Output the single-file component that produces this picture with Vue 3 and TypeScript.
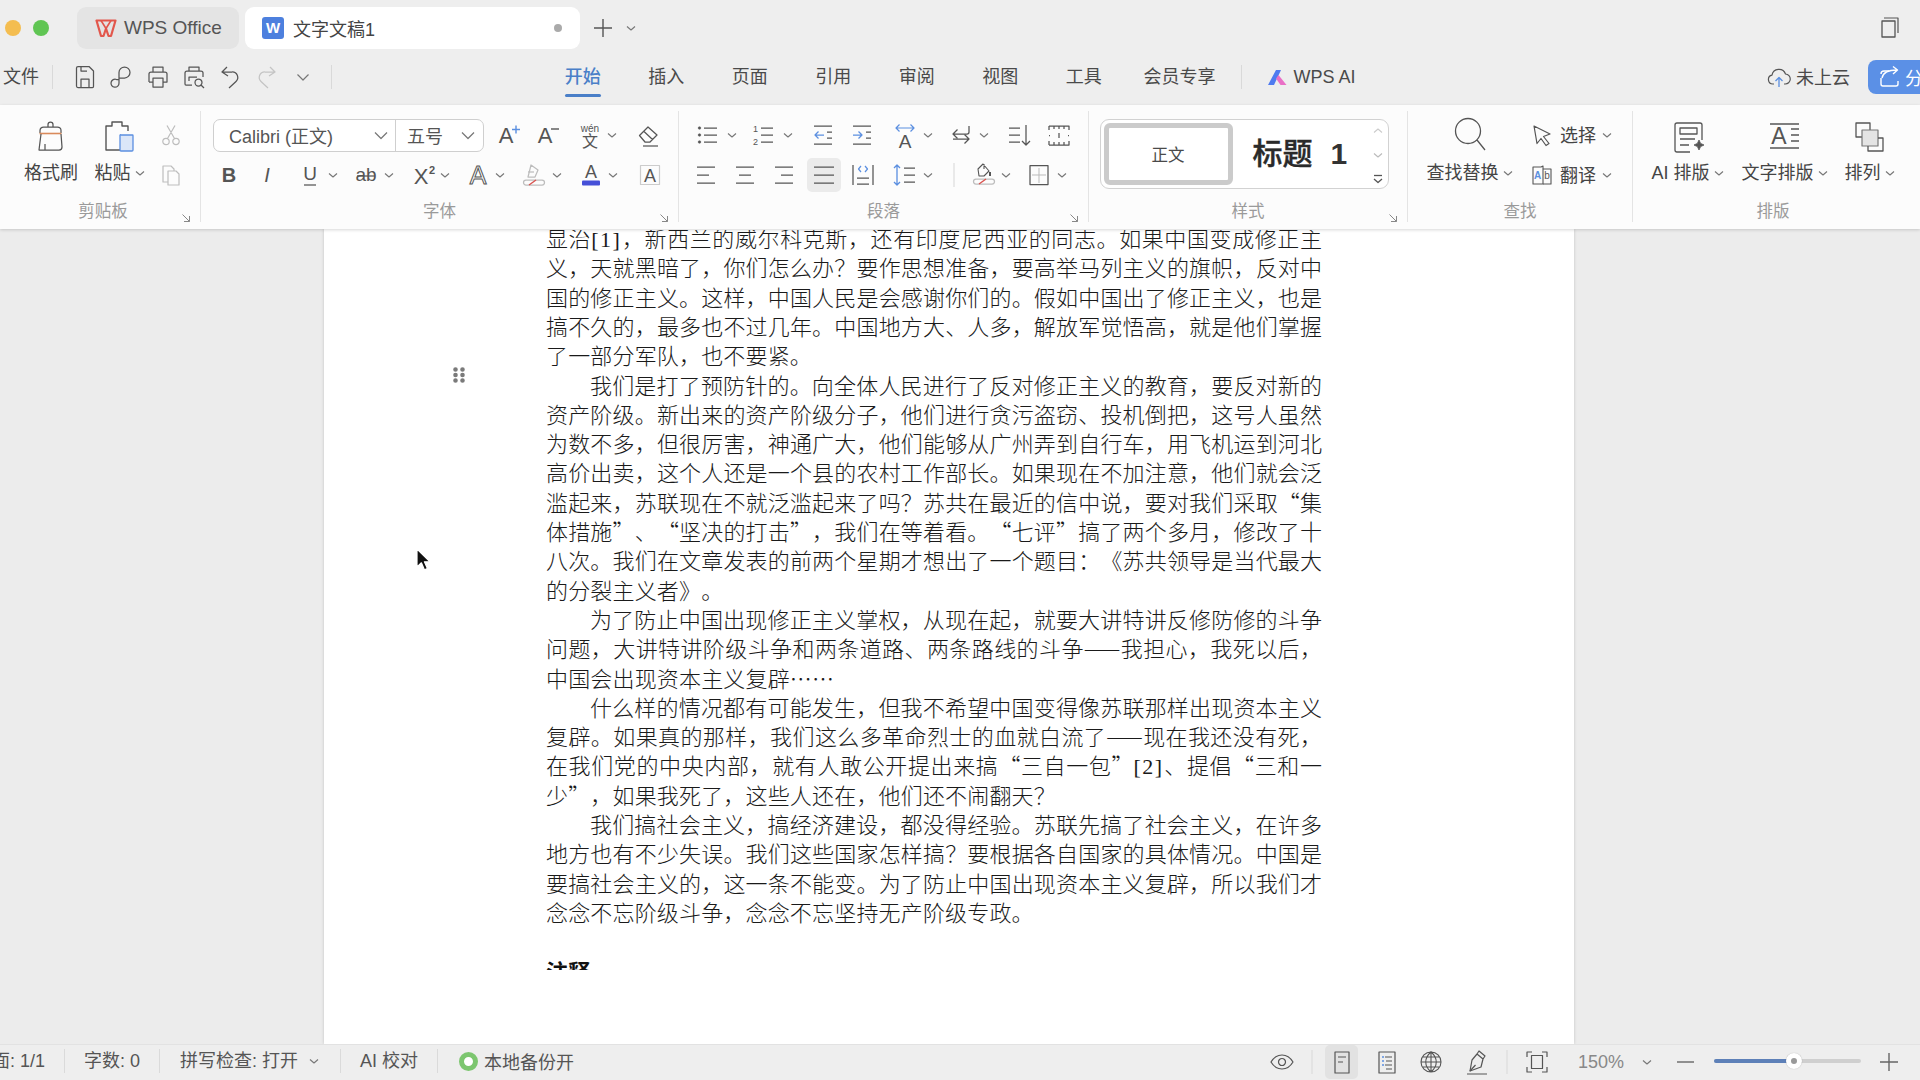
<script setup lang="ts">
import { h, type FunctionalComponent } from 'vue'

type El = { d?: string; c?: string; f?: string; w?: number; t?: string; x?: number; y?: number; fs?: number; fw?: number; it?: boolean; st?: boolean }
type Icon = { s: number; e: El[] }

const S = '#555'
const BL = '#5b8fe0'
const LT = '#bdbdbd'
const P = (d: string, c?: string, w?: number, f?: string): El => ({ d, c, w, f })
const T = (t: string, x: number, y: number, fs: number, o: Partial<El> = {}): El => ({ t, x, y, fs, ...o })
const circ = (cx: number, cy: number, r: number) => `M${cx - r} ${cy}a${r} ${r} 0 1 1 ${2 * r} 0a${r} ${r} 0 1 1 ${-2 * r} 0z`

const lines = (...ys: [number, number, number][]) => ys.map(([x1, x2, y]) => `M${x1} ${y}H${x2}`).join('')

const icons: Record<string, Icon> = {
  ch: { s: 12, e: [P('M2 4.5l4 3.5 4-3.5', '#777', 1.1)] },
  chb: { s: 16, e: [P('M2 5.5l6 6 6-6', '#777', 1.2)] },
  chup: { s: 12, e: [P('M2 7.5l4-3.5 4 3.5', '#ccc', 1.1)] },
  chdn: { s: 12, e: [P('M2 4.5l4 3.5 4-3.5', '#bbb', 1.1)] },
  more: { s: 12, e: [P('M2 2.5h8', S, 1.3), P('M2 6l4 3.5L10 6', S, 1.3)] },
  corner: { s: 10, e: [P('M1.5 1.5l7 7M3 8.5h5.5V3', '#888', 1)] },
  wps: { s: 24, e: [P('M2.5 4.5h19L17 20h-2.5L12 12.5 9.5 20H7z', '#e2574c', 2.2), P('M7 4.5l5 8 5-8', '#e2574c', 1.6)] },
  docw: { s: 24, e: [P('M4 1h16a3 3 0 0 1 3 3v16a3 3 0 0 1-3 3H4a3 3 0 0 1-3-3V4a3 3 0 0 1 3-3z', undefined, 0, '#4d80de'), T('W', 12, 16.5, 15, { c: '#fff', fw: 700 })] },
  plus: { s: 24, e: [P('M12 3v18M3 12h18', S, 1.4)] },
  win: { s: 24, e: [P('M6 6h13v16H6z', S, 1.3), P('M8 3h14v15', S, 1.2)] },
  save: { s: 28, e: [P('M7 3.5h11l4.5 4.5v15.5a1 1 0 0 1-1 1H7a1.5 1.5 0 0 1-1.5-1.5V5A1.5 1.5 0 0 1 7 3.5z', S), P('M10 24.5V16h8v8.5M10 3.5V8h6', S)] },
  pin: { s: 28, e: [P('M12 20V9.5a5.5 5.5 0 1 1 5.5 5.5H12', S), P('M12 16.5H9.5a4 4 0 1 0 2.5 3.5', S)] },
  print: { s: 28, e: [P('M9 9V4h10v5M5 19v-8a2 2 0 0 1 2-2h14a2 2 0 0 1 2 2v8h-4M5 19h4M9 15h10v9H9z', S)] },
  preview: { s: 28, e: [P('M9 8V4h10v4M12 22H6a1 1 0 0 1-1-1V10a2 2 0 0 1 2-2h14a2 2 0 0 1 2 2v4M9 18v-4h8', S), P(circ(18.5, 19.5, 3.5) + 'M21 22l3 3', S)] },
  undo: { s: 28, e: [P('M11 4L6 9l6 4M6 9h10a5.5 5.5 0 0 1 4 9.5L13 25', S)] },
  redo: { s: 28, e: [P('M17 4l5 5-6 4M22 9H12a5.5 5.5 0 0 0-4 9.5L15 25', '#c4c4c4')] },
  qch: { s: 16, e: [P('M2.5 5.5L8 11l5.5-5.5', '#777', 1.2)] },
  ai: { s: 24, e: [P('M3 20L11 5h5L9 20z', undefined, 0, '#4f7bf0'), P('M13.5 10l8 10h-6l-4.5-6.5z', undefined, 0, '#e96fc6')] },
  cloud: { s: 24, e: [P('M7 19H6a4.5 4.5 0 0 1-1-8.9A7 7 0 0 1 18.5 9 5 5 0 0 1 18 19h-1', S, 1.2), P('M12 22v-9M8.5 16l3.5-3.5 3.5 3.5', BL, 1.3)] },
  share: { s: 24, e: [P('M12 6H7a3 3 0 0 0-3 3v0M4 13v6a2 2 0 0 0 2 2h13a2 2 0 0 0 2-2v-3', '#fff', 1.4), P('M5 13c1-5 6-8 15-8M16 1.5L20.5 5 16 9', '#fff', 1.4)] },
  brush: { s: 36, e: [P('M15 10V7.5a2.5 2.5 0 0 1 5 0V10', S), P('M7 16v-2.5A3.5 3.5 0 0 1 10.5 10h14a3.5 3.5 0 0 1 3.5 3.5V16', S), P('M6.5 16.5h22', '#d98a5b', 1.6), P('M8 17L6 33h20a3 3 0 0 0 3-3L28 17M12 33v-6', S)] },
  paste: { s: 36, e: [P('M26 14V9h-6V5H10v4H4v24h14', S, 1.4), P('M19 18h11.5a.5.5 0 0 1 .5.5V33a1 1 0 0 1-1 1H19a1 1 0 0 1-1-1V18.5a.5.5 0 0 1 1-.5z', BL, 1.3, '#dbe6f8')] },
  cut: { s: 24, e: [P(circ(7, 18.5, 3.2) + circ(17, 18.5, 3.2) + 'M8.5 15.5L16 2.5M15.5 15.5L8 2.5', LT, 1.2)] },
  copy: { s: 24, e: [P('M4 3h8l3 3v13H4z', LT, 1.2), P('M9 8h8l3 3v11H9z', LT, 1.2, '#fcfcfc')] },
  aplus: { s: 28, e: [T('A', 11, 22, 22, { c: S }), P('M17 8.5h8M21 4.5v8', BL, 1.4)] },
  aminus: { s: 28, e: [T('A', 11, 22, 22, { c: S }), P('M17 8h8', S, 1.4)] },
  wen: { s: 28, e: [T('wén', 14, 11, 10, { c: S }), T('文', 14, 26, 16, { c: S })] },
  eraser: { s: 28, e: [P('M3.5 14.5L12 6l9 8-7 7H9zM8 10.5l8.5 8', S), P('M7 25h15', S)] },
  bold: { s: 28, e: [T('B', 14, 21, 20, { c: S, fw: 700 })] },
  italic: { s: 28, e: [T('I', 14, 21, 20, { c: S, it: true })] },
  under: { s: 28, e: [T('U', 14, 19, 19, { c: S }), P('M8 24h12', S)] },
  strike: { s: 28, e: [T('ab', 14, 20, 19, { c: S }), P('M5 15h18', S)] },
  sup: { s: 28, e: [T('X', 11, 23, 22, { c: S }), T('2', 22, 13, 11, { c: S, fw: 700 })] },
  outa: { s: 28, e: [T('A', 14, 23, 25, { c: S, st: true })] },
  hl: { s: 28, e: [P('M11 4l7 5-3 7H8z', LT), P('M8 11h6', LT), P('M6 19h16a2.5 2.5 0 0 1 0 5H6a2.5 2.5 0 0 1 0-5z', LT), P('M9 24l7-5', '#d9534f', 1.4)] },
  cola: { s: 28, e: [T('A', 14, 17, 18, { c: S }), P('M6 19.5h16a1 1 0 0 1 1 1v3a1 1 0 0 1-1 1H6a1 1 0 0 1-1-1v-3a1 1 0 0 1 1-1z', undefined, 0, '#4650d8')] },
  boxa: { s: 28, e: [P('M4.5 4.5h19v19h-19z', '#ccc', 1.2), T('A', 14, 21, 18, { c: S })] },
  bullets: { s: 28, e: [P(lines([9, 22, 7], [9, 22, 14], [9, 22, 21]), S), P(circ(4.5, 7, 1.3) + circ(4.5, 14, 1.3) + circ(4.5, 21, 1.3), S, 0.5, S)] },
  numbered: { s: 28, e: [T('1', 4.5, 11, 9, { c: S }), T('2', 4.5, 24, 9, { c: S }), P(lines([10, 22, 7], [10, 22, 14], [10, 22, 21]), S)] },
  outdent: { s: 28, e: [P(lines([5, 23, 5], [5, 23, 23], [18, 23, 11], [18, 23, 17]), S), P('M15 14H6M9.5 10.5L6 14l3.5 3.5', BL)] },
  indent: { s: 28, e: [P(lines([5, 23, 5], [5, 23, 23], [18, 23, 11], [18, 23, 17]), S), P('M5 14h9M10.5 10.5L14 14l-3.5 3.5', BL)] },
  aspace: { s: 28, e: [P('M5 7h18M8.5 3.5L5 7l3.5 3.5M19.5 3.5L23 7l-3.5 3.5', BL, 1.2), T('A', 14, 27, 19, { c: S })] },
  swap: { s: 28, e: [P('M22 5v6a2 2 0 0 1-2 2H6M10.5 8.5L6 13l4.5 4.5', S), P('M6 18h16M17.5 13.5L22 18l-4.5 4.5', S)] },
  sortd: { s: 28, e: [P(lines([3, 14, 7], [3, 14, 14], [3, 14, 21]), S), P('M20 4v20M16 20l4 4 4-4', S)] },
  ruler: { s: 28, e: [P('M4 5h20v4M4 5v4M9 5v3M14 5v3M19 5v3M4 24h20v-4M4 24v-4M9 24v-3M14 24v-3M19 24v-3', S), P('M4 14.5h1M23 14.5h1M14 12v5', S)] },
  aleft: { s: 28, e: [P(lines([5, 23, 6], [5, 17, 14], [5, 23, 22]), S)] },
  acenter: { s: 28, e: [P(lines([5, 23, 6], [8, 20, 14], [5, 23, 22]), S)] },
  aright: { s: 28, e: [P(lines([5, 23, 6], [11, 23, 14], [5, 23, 22]), S)] },
  ajust: { s: 34, e: [P('M5 0h24a5 5 0 0 1 5 5v24a5 5 0 0 1-5 5H5a5 5 0 0 1-5-5V5a5 5 0 0 1 5-5z', undefined, 0, '#ebebeb'), P(lines([7, 27, 9], [7, 27, 17], [7, 27, 25]), S)] },
  dist: { s: 28, e: [P('M4 4v20M24 4v20', S), P(lines([8, 20, 17], [8, 20, 23]), S), P('M12 5L9.5 8l2.5 3M16 5l2.5 3-2.5 3', BL, 1.2)] },
  lineh: { s: 28, e: [P('M6 4v20M3 7l3-3 3 3M3 21l3 3 3-3', BL, 1.3), P(lines([13, 24, 7], [13, 24, 14], [13, 24, 21]), S)] },
  vsep: { s: 26, e: [P('M13 1v24', '#dcdcdc', 1.2)] },
  fill: { s: 28, e: [P('M8 8l5-5 6 7-5 5H9zM14 3v5', S, 1.1), P('M20 11v4', S, 2), P('M6 18h16a2.5 2.5 0 0 1 0 5H6a2.5 2.5 0 0 1 0-5z', LT), P('M9 23l7-5', '#d9534f', 1.4)] },
  border: { s: 28, e: [P('M5 4.5h18v19H5z', S), P('M14 7v15M7 14h14', '#bbb', 1, undefined)] },
  search: { s: 40, e: [P(circ(18, 16, 12.5) + 'M27 25l8 10', S, 1.3)] },
  cursor: { s: 24, e: [P('M4 3l16 8-6.5 2.5 5.5 7-3 2-5-7-4 5z', S, 1.2)] },
  trans: { s: 24, e: [P('M3 4h8l2-1v18H3z', S, 1.1), P('M13 6h8v15H13', S, 1.1), T('A', 7.5, 16, 10, { c: BL, fw: 700 }), T('b', 17, 16, 10, { c: S })] },
  ailay: { s: 40, e: [P('M34 25V10a2 2 0 0 0-2-2H9a2 2 0 0 0-2 2v25a2 2 0 0 0 2 2h13', S, 1.3), P('M12 13h17v6H12zM12 24h15M12 30h9', S, 1.3), P('M31 25l1.6 3.4L36 30l-3.4 1.6L31 35l-1.6-3.4L26 30l3.4-1.6z', S, 0.8, S)] },
  txlay: { s: 40, e: [P('M5 9h29M5 33h29', S, 1.3), T('A', 14, 29, 23, { c: S }), P(lines([26, 34, 14], [26, 34, 20], [26, 34, 26]), S, 1.3)] },
  arrange: { s: 40, e: [P('M6 8h14v14H6z', S, 1.3), P('M12 15h16v16H12z', '#777', 1.2, '#e4e4e4'), P('M28 23h5v13H18v-5', S, 1.3)] },
  eye: { s: 28, e: [P('M3 14c3-5 7-7 11-7s8 2 11 7c-3 5-7 7-11 7s-8-2-11-7z', S, 1.2), P(circ(14, 14, 3.5), S, 1.2)] },
  sdoc: { s: 34, e: [P('M5 0h23a5 5 0 0 1 5 5v24a5 5 0 0 1-5 5H5a5 5 0 0 1-5-5V5a5 5 0 0 1 5-5z', undefined, 0, '#e2e2e2'), P('M10 7h14v21H10z', S, 1.2), P(lines([13, 21, 12], [13, 18, 17]), S, 1.2)] },
  soutline: { s: 28, e: [P('M6 4h16v21H6z', S, 1.2), P(lines([12, 19, 9], [13, 19, 13], [12, 19, 17], [13, 19, 21]), S, 1.2), P(lines([9, 11, 9], [9, 11, 13], [9, 11, 17]), BL, 1.4)] },
  globe: { s: 28, e: [P(circ(14, 14, 10) + 'M14 4c-7 6-7 14 0 20M14 4c7 6 7 14 0 20M14 4v20M4 14h20M5.5 9h17M5.5 19h17', S, 1.1)] },
  pen: { s: 28, e: [P('M16 3l6 5-2 3-6-5zM14 6l6 5-2 8-11 4 2-11z', S, 1.2), P('M7 23l5.5-6M4 26h20', S, 1.2)] },
  fit: { s: 28, e: [P('M4 9V4h5M19 4h5v5M24 19v5h-5M9 24H4v-5', S, 1.2), P('M8.5 7.5h11v13h-11z', S, 1.2)] },
  minus: { s: 22, e: [P('M3 11h17', '#666', 1.4)] },
  splus: { s: 24, e: [P('M12 3v18M3 12h18', '#666', 1.4)] },
  grip: { s: 16, e: [P(circ(4.5, 2.5, 2.3) + circ(11.5, 2.5, 2.3) + circ(4.5, 8, 2.3) + circ(11.5, 8, 2.3) + circ(4.5, 13.5, 2.3) + circ(11.5, 13.5, 2.3), undefined, 0, '#7a7a7a')] },
  pointer: { s: 24, e: [P('M3 1v18l4.4-4.2 3 7 3-1.2-3-6.8H16z', '#fff', 1.2, '#111')] },
}

const Ico: FunctionalComponent<{ name: string }> = (p) => {
  const ic = icons[p.name]
  return h(
    'svg',
    { width: ic.s, height: ic.s, viewBox: `0 0 ${ic.s} ${ic.s}`, fill: 'none', style: { flex: 'none', overflow: 'visible' } },
    ic.e.map((el) =>
      el.t
        ? h('text', {
            x: el.x, y: el.y, 'font-size': el.fs, 'font-weight': el.fw ?? 400,
            'font-style': el.it ? 'italic' : 'normal', 'text-anchor': 'middle',
            'font-family': "'Liberation Sans','Noto Sans CJK SC',sans-serif",
            fill: el.st ? 'none' : el.c, stroke: el.st ? el.c : 'none', 'stroke-width': el.st ? 1 : 0,
          }, el.t)
        : h('path', { d: el.d, stroke: el.w === 0 ? 'none' : el.c, 'stroke-width': el.w ?? 1.25, fill: el.f ?? 'none', 'stroke-linejoin': 'round' }),
    ),
  )
}

type Item = { i: string; x: number }
function place(items: Item[], origin: number) {
  let end = origin
  return items.map((it) => {
    const s = icons[it.i].s
    const ml = it.x - s / 2 - end
    end = it.x + s / 2
    return { ...it, ml }
  })
}
const row = (origin: number, s: string) =>
  place(s.split(' ').map((p) => { const [i, x] = p.split(':'); return { i, x: Number(x) } }), origin)

const quick = row(53, 'save:85 pin:121 print:158 preview:194 undo:230 redo:267 qch:303')
const font1 = row(484, 'aplus:509 aminus:548 wen:590 ch:612 eraser:650')
const font2 = row(201, 'bold:229 italic:267 under:310 ch:333 strike:366 ch:389 sup:424 ch:445 outa:478 ch:500 hl:534 ch:557 cola:591 ch:613 boxa:650')
const para1 = row(679, 'bullets:709 ch:732 numbered:765 ch:788 outdent:823 indent:862 aspace:905 ch:928 swap:961 ch:984 sortd:1020 ruler:1059')
const para2 = row(679, 'aleft:706 acenter:745 aright:784 ajust:824 dist:863 lineh:905 ch:928 vsep:954 fill:984 ch:1006 border:1039 ch:1062')
const statusR = row(1262, 'eye:1282 vsep:1312 sdoc:1342 soutline:1387 globe:1431 pen:1477 vsep:1507 fit:1537')

const tabs = ['开始', '插入', '页面', '引用', '审阅', '视图', '工具']

const doc: { t: string; i?: boolean; e?: boolean; b?: boolean }[] = [
  { t: '显治[1]，新西兰的威尔科克斯，还有印度尼西亚的同志。如果中国变成修正主' },
  { t: '义，天就黑暗了，你们怎么办？要作思想准备，要高举马列主义的旗帜，反对中' },
  { t: '国的修正主义。这样，中国人民是会感谢你们的。假如中国出了修正主义，也是' },
  { t: '搞不久的，最多也不过几年。中国地方大、人多，解放军觉悟高，就是他们掌握' },
  { t: '了一部分军队，也不要紧。', e: true },
  { t: '我们是打了预防针的。向全体人民进行了反对修正主义的教育，要反对新的', i: true },
  { t: '资产阶级。新出来的资产阶级分子，他们进行贪污盗窃、投机倒把，这号人虽然' },
  { t: '为数不多，但很厉害，神通广大，他们能够从广州弄到自行车，用飞机运到河北' },
  { t: '高价出卖，这个人还是一个县的农村工作部长。如果现在不加注意，他们就会泛' },
  { t: '滥起来，苏联现在不就泛滥起来了吗？苏共在最近的信中说，要对我们采取“集' },
  { t: '体措施”、“坚决的打击”，我们在等着看。“七评”搞了两个多月，修改了十' },
  { t: '八次。我们在文章发表的前两个星期才想出了一个题目：《苏共领导是当代最大' },
  { t: '的分裂主义者》。', e: true },
  { t: '为了防止中国出现修正主义掌权，从现在起，就要大讲特讲反修防修的斗争', i: true },
  { t: '问题，大讲特讲阶级斗争和两条道路、两条路线的斗争——我担心，我死以后，' },
  { t: '中国会出现资本主义复辟……', e: true },
  { t: '什么样的情况都有可能发生，但我不希望中国变得像苏联那样出现资本主义', i: true },
  { t: '复辟。如果真的那样，我们这么多革命烈士的血就白流了——现在我还没有死，' },
  { t: '在我们党的中央内部，就有人敢公开提出来搞“三自一包”[2]、提倡“三和一' },
  { t: '少”，如果我死了，这些人还在，他们还不闹翻天？', e: true },
  { t: '我们搞社会主义，搞经济建设，都没得经验。苏联先搞了社会主义，在许多', i: true },
  { t: '地方也有不少失误。我们这些国家怎样搞？要根据各自国家的具体情况。中国是' },
  { t: '要搞社会主义的，这一条不能变。为了防止中国出现资本主义复辟，所以我们才' },
  { t: '念念不忘阶级斗争，念念不忘坚持无产阶级专政。', e: true },
  { t: '\u00a0', e: true },
  { t: '注释', e: true, b: true },
]
const parts = (t: string) => t.split(/(\[\d\])/)
</script>

<template>
  <div class="app">
    <header class="title">
      <i class="dot yellow"></i>
      <i class="dot green"></i>
      <div class="tab home"><Ico name="wps" /><span>WPS Office</span></div>
      <div class="tab docu"><Ico name="docw" /><span>文字文稿1</span><i class="unsaved"></i></div>
      <Ico class="newtab" name="plus" />
      <Ico class="newch" name="ch" />
      <Ico class="win" name="win" />
    </header>

    <nav class="bar">
      <span class="file">文件</span>
      <i class="bsep"></i>
      <div class="quick">
        <Ico v-for="(t, k) in quick" :key="k" :name="t.i" :style="{ marginLeft: t.ml + 'px' }" />
      </div>
      <i class="bsep second"></i>
      <div class="tabs">
        <span v-for="(t, k) in tabs" :key="t" class="mt" :class="{ active: k === 0 }">{{ t }}</span>
        <span class="mt vip">会员专享</span>
        <i class="bsep third"></i>
        <Ico class="ailogo" name="ai" />
        <span class="wpsai">WPS AI</span>
      </div>
      <div class="right">
        <Ico name="cloud" />
        <span class="cl">未上云</span>
        <div class="sharebtn"><Ico name="share" /><span>分享</span></div>
      </div>
    </nav>

    <section class="ribbon">
      <div class="group g1">
        <div class="body">
          <div class="big w60 first-big">
            <div class="bi"><Ico name="brush" /></div>
            <div class="bl">格式刷</div>
          </div>
          <div class="big w60 b2">
            <div class="bi"><Ico name="paste" /></div>
            <div class="bl">粘贴<Ico name="ch" /></div>
          </div>
          <div class="stack st1">
            <Ico name="cut" />
            <Ico name="copy" />
          </div>
        </div>
        <div class="gl pad6">剪贴板</div>
        <Ico class="corner" name="corner" />
      </div>

      <div class="group g2">
        <div class="rows">
          <div class="row">
            <div class="combo">
              <div class="cf">Calibri (正文)<Ico name="chb" /></div>
              <div class="cs">五号<Ico name="chb" /></div>
            </div>
            <Ico v-for="(t, k) in font1" :key="k" :name="t.i" :style="{ marginLeft: t.ml + 'px' }" />
          </div>
          <div class="row">
            <Ico v-for="(t, k) in font2" :key="k" :name="t.i" :style="{ marginLeft: t.ml + 'px' }" />
          </div>
        </div>
        <div class="gl">字体</div>
        <Ico class="corner" name="corner" />
      </div>

      <div class="group g3">
        <div class="rows">
          <div class="row">
            <Ico v-for="(t, k) in para1" :key="k" :name="t.i" :style="{ marginLeft: t.ml + 'px' }" />
          </div>
          <div class="row">
            <Ico v-for="(t, k) in para2" :key="k" :name="t.i" :style="{ marginLeft: t.ml + 'px' }" />
          </div>
        </div>
        <div class="gl">段落</div>
        <Ico class="corner" name="corner" />
      </div>

      <div class="group g4">
        <div class="stylebox">
          <div class="sel">正文</div>
          <div class="h1">标题<b>1</b></div>
          <div class="scroll">
            <Ico name="chup" />
            <Ico name="chdn" />
            <Ico name="more" />
          </div>
        </div>
        <div class="gl abs">样式</div>
        <Ico class="corner" name="corner" />
      </div>

      <div class="group g5">
        <div class="body">
          <div class="big w88 b5">
            <div class="bi"><Ico name="search" /></div>
            <div class="bl">查找替换<Ico name="ch" /></div>
          </div>
          <div class="stack2">
            <div class="sr"><Ico name="cursor" /><span>选择</span><Ico name="ch" /></div>
            <div class="sr"><Ico name="trans" /><span>翻译</span><Ico name="ch" /></div>
          </div>
        </div>
        <div class="gl">查找</div>
      </div>

      <div class="group g6">
        <div class="body">
          <div class="big w76 b6a">
            <div class="bi"><Ico name="ailay" /></div>
            <div class="bl">AI 排版<Ico name="ch" /></div>
          </div>
          <div class="big w88 b6b">
            <div class="bi"><Ico name="txlay" /></div>
            <div class="bl">文字排版<Ico name="ch" /></div>
          </div>
          <div class="big w52 b6c">
            <div class="bi"><Ico name="arrange" /></div>
            <div class="bl">排列<Ico name="ch" /></div>
          </div>
        </div>
        <div class="gl">排版</div>
      </div>
    </section>

    <main class="main">
      <article class="page">
        <Ico class="grip" name="grip" />
        <div class="text">
          <div
            v-for="(l, k) in doc"
            :key="k"
            class="ln"
            :class="{ ind: l.i, end: l.e, bold: l.b }"
          ><template v-for="(p, n) in parts(l.t)" :key="n"><span v-if="n % 2" class="latin">{{ p }}</span><template v-else>{{ p }}</template></template></div>
        </div>
      </article>
      <Ico class="pointer" name="pointer" />
    </main>

    <footer class="status">
      <div class="sl first"><span>页面: 1/1</span></div>
      <div class="sl">字数: 0</div>
      <div class="sl spell">拼写检查: 打开<Ico name="ch" /></div>
      <div class="sl">AI 校对</div>
      <div class="backup"><i class="gdot"></i>本地备份开</div>
      <div class="sr-right">
        <Ico v-for="(t, k) in statusR" :key="k" :name="t.i" :style="{ marginLeft: t.ml + 'px' }" />
        <span class="zoomv">150%</span>
        <Ico class="zch" name="ch" />
        <Ico class="zminus" name="minus" />
        <div class="slider"><i class="fill"></i><i class="knob"></i></div>
        <Ico class="zplus" name="splus" />
      </div>
    </footer>
  </div>
</template>

<style scoped>
.app {
  width: 1920px;
  height: 1080px;
  overflow: hidden;
  display: flex;
  flex-direction: column;
  background: #eeeeee;
  color: #4a4a4a;
  font-family: 'Liberation Sans', 'Noto Sans CJK SC', sans-serif;
  font-size: 18px;
}
i { display: block; font-style: normal; }

.title {
  height: 60px;
  flex: none;
  box-sizing: border-box;
  padding-top: 7px;
  display: flex;
  align-items: flex-start;
}
.dot { width: 16px; height: 16px; border-radius: 50%; margin-top: 13px; flex: none; }
.yellow { background: #f4bd50; margin-left: 5px; }
.green { background: #60c553; margin-left: 12px; }
.tab {
  height: 42px;
  display: flex;
  align-items: center;
  border-radius: 9px;
  box-sizing: border-box;
  flex: none;
}
.home { width: 162px; margin-left: 28px; background: #e4e4e4; padding-left: 17px; gap: 6px; font-size: 19px; color: #555; }
.docu { width: 335px; margin-left: 6px; background: #fff; padding-left: 16px; gap: 8px; color: #444; }
.unsaved { width: 8px; height: 8px; border-radius: 50%; background: #aaa; margin-left: auto; margin-right: 18px; }
.newtab { margin: 9px 0 0 11px; }
.newch { margin: 15px 0 0 10px; }
.win { margin: 8px 20px 0 auto; }

.bar {
  height: 45px;
  flex: none;
  display: flex;
  align-items: flex-start;
  position: relative;
}
.file { width: 52px; box-sizing: border-box; padding-left: 3px; line-height: 34px; flex: none; }
.bsep { width: 1px; height: 24px; background: #d9d9d9; margin-top: 5px; flex: none; }
.quick { display: flex; height: 34px; align-items: center; flex: none; }
.second { margin-left: 20px; }
.tabs { display: flex; align-items: flex-start; margin-left: 209px; flex: none; }
.mt { width: 83.5px; text-align: center; line-height: 34px; position: relative; flex: none; }
.mt.active { color: #4a7fc8; font-weight: 500; }
.mt.active::after {
  content: '';
  position: absolute;
  left: 24px;
  width: 36px;
  top: 34px;
  height: 3px;
  background: #4a7fc8;
  border-radius: 2px;
}
.vip { width: auto; margin-left: 18px; }
.third { margin-left: 25px; }
.ailogo { margin: 5px 0 0 23px; }
.wpsai { margin-left: 5px; line-height: 34px; }
.right { margin-left: auto; display: flex; align-items: center; height: 34px; }
.cl { margin-left: 5px; margin-top: -2px; }
.sharebtn {
  margin-left: 18px;
  margin-right: -20px;
  height: 34px;
  width: 72px;
  box-sizing: border-box;
  background: #5b90e6;
  border-radius: 8px 0 0 8px;
  color: #fff;
  display: flex;
  align-items: center;
  padding-left: 9px;
  gap: 4px;
  white-space: nowrap;
  overflow: hidden;
}

.ribbon {
  height: 124px;
  flex: none;
  background: #fcfcfc;
  display: flex;
  box-sizing: border-box;
  padding-top: 6px;
  position: relative;
  z-index: 2;
  box-shadow: 0 1px 3px rgba(0, 0, 0, 0.16);
  border-top: 0;
}
.group {
  height: 111px;
  box-sizing: border-box;
  flex: none;
  position: relative;
  border-right: 1.5px solid #e4e4e4;
  display: flex;
  flex-direction: column;
}
.g1 { width: 201px; }
.g2 { width: 478px; }
.g3 { width: 410px; }
.g4 { width: 319px; }
.g5 { width: 225px; }
.g6 { width: 280px; border-right: 0; }
.rows { padding-top: 4px; height: 89px; box-sizing: border-box; }
.row { height: 40px; display: flex; align-items: center; }
.body { height: 89px; display: flex; padding-top: 4px; box-sizing: border-box; align-items: flex-start; }
.gl {
  height: 22px;
  line-height: 22px;
  text-align: center;
  font-size: 16.5px;
  color: #9a9a9a;
}
.pad6 { padding-left: 6px; }
.gl.abs { margin-top: auto; }
.corner { position: absolute; right: 9px; top: 102px; }
.big { display: flex; flex-direction: column; align-items: center; flex: none; }
.w60 { width: 60px; }
.w88 { width: 88px; }
.w76 { width: 76px; }
.w52 { width: 52px; }
.bi { height: 40px; display: flex; align-items: center; justify-content: center; }
.bl { height: 36px; line-height: 36px; display: flex; align-items: center; gap: 3px; white-space: nowrap; color: #444; }
.first-big { margin-left: 21px; }
.b2 { margin-left: 9px; }
.st1 { margin-left: 9px; }
.stack { height: 80px; display: flex; flex-direction: column; align-items: center; justify-content: space-around; flex: none; }
.b5 { margin-left: 18px; }
.stack2 { margin-left: 16px; display: flex; flex-direction: column; flex: none; }
.sr { height: 40px; display: flex; align-items: center; gap: 6px; color: #444; }
.sr span { margin-top: -2px; }
.sr span + svg { margin-left: -1px; }
.b6a { margin-left: 17px; }
.b6b { margin-left: 15px; }
.b6c { margin-left: 15px; }

.combo {
  margin-left: 12px;
  width: 271px;
  height: 33px;
  box-sizing: border-box;
  border: 1.5px solid #cfcfcf;
  border-radius: 7px;
  display: flex;
  flex: none;
  background: #fff;
  color: #555;
}
.cf {
  width: 182px;
  box-sizing: border-box;
  padding: 0 6px 0 15px;
  border-right: 1.5px solid #cfcfcf;
  display: flex;
  align-items: center;
  justify-content: space-between;
  white-space: nowrap;
}
.cs { flex: 1; padding: 0 7px 0 11px; display: flex; align-items: center; justify-content: space-between; }

.stylebox {
  margin: 8px 0 0 11px;
  width: 289px;
  height: 70px;
  box-sizing: border-box;
  border: 1.5px solid #d2d2d2;
  border-radius: 9px;
  padding: 2.5px;
  display: flex;
  background: #fff;
  flex: none;
}
.sel {
  width: 129px;
  height: 62px;
  box-sizing: border-box;
  border: 5px solid #cbcbcb;
  border-radius: 6px;
  display: flex;
  align-items: center;
  justify-content: center;
  font-size: 16.5px;
  flex: none;
}
.h1 {
  margin-left: 20px;
  font-size: 30px;
  line-height: 62px;
  color: #2a2a2a;
  font-weight: 500;
  white-space: nowrap;
  -webkit-text-stroke: 0.4px #2a2a2a;
  flex: none;
}
.h1 b { margin-left: 18px; font-size: 30px; -webkit-text-stroke: 0; color: #333; }
.scroll {
  margin-left: auto;
  margin-right: 1px;
  width: 14px;
  display: flex;
  flex-direction: column;
  align-items: center;
  padding-top: 2px;
  gap: 12px;
}

.main { flex: 1; min-height: 0; background: #ececec; position: relative; overflow: hidden; }
.page {
  width: 1250px;
  height: 100%;
  margin-left: 324px;
  background: #fff;
  box-sizing: border-box;
  padding: 1px 252px 0 222px;
  position: relative;
  box-shadow: 0 0 3px rgba(0, 0, 0, 0.18);
}
.text { height: 740px; overflow: hidden; }
.ln {
  font-family: 'Noto Sans CJK SC', 'Liberation Serif', sans-serif;
  font-size: 22px;
  font-weight: 300;
  line-height: 29.3px;
  height: 29.3px;
  color: #1a1a1a;
  text-align: justify;
  text-align-last: justify;
  text-spacing-trim: space-all;
  position: relative;
  top: -6.9px;
}
.latin { font-family: 'Liberation Serif', serif; letter-spacing: 1.5px; line-height: 0; }
.ln.ind { text-indent: 44px; }
.ln.end { text-align-last: left; letter-spacing: 0.17px; }
.ln.bold { font-weight: 700; color: #111; }
.grip { position: absolute; left: 127px; top: 138px; }
.pointer { position: absolute; left: 414px; top: 319px; }

.status {
  height: 36px;
  flex: none;
  display: flex;
  align-items: center;
  border-top: 1.5px solid #e2e2e2;
  padding-bottom: 2.5px;
  box-sizing: border-box;
  color: #555;
  position: relative;
  z-index: 1;
}
.sl {
  height: 24px;
  line-height: 24px;
  padding: 0 19px;
  border-right: 1px solid #dadada;
  flex: none;
  display: flex;
  align-items: center;
  white-space: nowrap;
}
.first { width: 65px; box-sizing: border-box; padding: 0 19px 0 0; overflow: hidden; justify-content: flex-end; }
.first span { flex: none; }
.spell { gap: 10px; padding: 0 20px; }
.backup { display: flex; align-items: center; margin-left: 21px; gap: 6px; flex: none; }
.gdot { width: 9px; height: 9px; border-radius: 50%; background: #fff; border: 5px solid #7cc66f; flex: none; }
.sr-right {
  position: absolute;
  left: 1262px;
  top: 0;
  width: 658px;
  height: 34px;
  display: flex;
  align-items: center;
}
.zoomv { margin-left: 27px; color: #888; flex: none; }
.zch { margin-left: 17px; }
.zminus { margin-left: 21px; }
.slider { margin-left: 18px; margin-top: -2px; width: 147px; height: 4px; background: #cfcfcf; border-radius: 2px; position: relative; flex: none; }
.fill { position: absolute; left: 0; top: 0; width: 76px; height: 4px; background: #5d80b8; border-radius: 2px; }
.knob {
  position: absolute;
  left: 72px;
  top: -6px;
  width: 6px;
  height: 6px;
  padding: 0;
  border-radius: 50%;
  background: #999;
  border: 5px solid #fff;
  box-shadow: 0 0 1px rgba(0, 0, 0, 0.3);
}
.zplus { margin-left: 16px; }
</style>
